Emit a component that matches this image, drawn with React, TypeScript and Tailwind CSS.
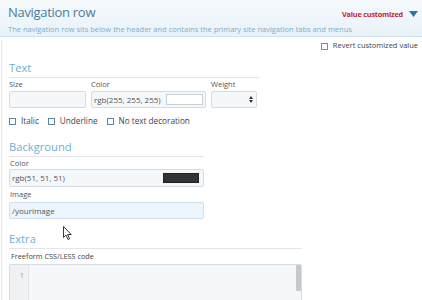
import { ReactNode } from "react";

const font = { fontFamily: '"Open Sans", "Noto Sans", sans-serif' };

const Check = ({
  label,
  gray,
  size = "text-[8.2px]",
}: {
  label: string;
  gray?: boolean;
  size?: string;
}) => (
  <label className={`flex items-center gap-[5px] ${size} text-[#444] whitespace-nowrap`}>
    <span
      className={
        "w-[7px] h-[7px] border bg-white shrink-0 " +
        (gray ? "border-[#8a8a8a]" : "border-[#5b86a8]")
      }
    />
    {label}
  </label>
);

const Heading = ({ children, w }: { children: ReactNode; w: string }) => (
  <div
    className={`${w} h-[18px] border-b border-[#e3e6e8] leading-[16px] text-[11.2px] text-[#6cb0d3]`}
  >
    {children}
  </div>
);

const Field = "border border-[#d3dce3] rounded-[2px] bg-[#f5f8fa]";

export default function App() {
  return (
    <div
      className="relative w-[422px] h-[300px] overflow-hidden bg-white"
      style={font}
    >
      {/* header */}
      <div className="h-[37px] border-b border-[#d5e3ee] bg-gradient-to-b from-[#f5f9fc] to-[#e9f2f9] pl-2 pr-[4px] flex justify-between">
        <div className="min-w-0">
          <div className="text-[13px] tracking-[-0.3px] leading-[18px] pt-[3px] text-[#4d7b9b]">
            Navigation row
          </div>
          <div className="text-[7.5px] leading-[10px] mt-[3px] text-[#7eadca] whitespace-nowrap">
            The navigation row sits below the header and contains the primary
            site navigation tabs and menus
          </div>
        </div>
        <div className="shrink-0 flex items-start gap-[6px] pt-[9px]">
          <span className="text-[7.3px] tracking-[-0.2px] font-bold text-[#c4262e] leading-[10px] whitespace-nowrap">
            Value customized
          </span>
          <svg width="9" height="6" viewBox="0 0 9 6" className="mt-[2px]">
            <path d="M0 0h9L4.5 6z" fill="#2f72ab" />
          </svg>
        </div>
      </div>

      <div className="border-l border-[#e4e6e8] ml-[1px] h-[263px] pl-[7px]">
        <div className="h-[12px] mt-[3px] flex justify-end pr-[4px]">
          <Check label="Revert customized value" gray size="text-[7.5px]" />
        </div>

        {/* Text */}
        <div className="mt-[8px]">
          <Heading w="w-[250px]">Text</Heading>
          <div className="flex gap-[5px] text-[7.5px] text-[#555]">
            <div className="w-[77px]">
              <div className="h-[13px] leading-[13px]">Size</div>
              <div className={`${Field} h-[17px]`} />
            </div>
            <div className="w-[115px]">
              <div className="h-[13px] leading-[13px]">Color</div>
              <div className={`${Field} h-[17px] flex items-center justify-between pl-[2px] pr-[2px]`}>
                <span className="text-[8px] text-[#555] whitespace-nowrap overflow-hidden w-[70px]">
                  rgb(255, 255, 255)
                </span>
                <span className="w-[37px] h-[11px] bg-white border border-[#c6ced6]" />
              </div>
            </div>
            <div className="w-[46px]">
              <div className="h-[13px] leading-[13px]">Weight</div>
              <div className={`${Field} h-[17px] flex items-center justify-end pr-[3px]`}>
                <svg width="4" height="7" viewBox="0 0 4 7">
                  <path d="M0 3L2 0l2 3zM0 4l2 3 2-3z" fill="#333" />
                </svg>
              </div>
            </div>
          </div>
          <div className="flex gap-[9px] h-[12px] mt-[7px]">
            <Check label="Italic" />
            <Check label="Underline" />
            <Check label="No text decoration" />
          </div>
        </div>

        {/* Background */}
        <div className="mt-[12px] w-[195px]">
          <Heading w="w-[195px]">Background</Heading>
          <div className="h-[12px] leading-[12px] text-[7.5px] text-[#555] pl-[1px]">
            Color
          </div>
          <div className={`${Field} h-[18px] flex items-center justify-between pl-[2px] pr-[4px]`}>
            <span className="text-[8px] text-[#555]">rgb(51, 51, 51)</span>
            <span className="w-[36px] h-[10px] bg-[#333333] border border-[#222]" />
          </div>
          <div className="h-[15px] leading-[15px] text-[7.5px] text-[#555] pl-[1px]">
            Image
          </div>
          <div className="h-[17px] border border-[#cfe0ee] rounded-[2px] bg-[#edf5fc] flex items-center pl-[2px] text-[8px] text-[#555]">
            /yourimage
          </div>
        </div>

        {/* Extra */}
        <div className="mt-[12px] w-[293px]">
          <Heading w="w-[293px]">Extra</Heading>
          <div className="h-[15px] leading-[15px] text-[7.3px] text-[#444] pl-[2px]">
            Freeform CSS/LESS code
          </div>
          <div className="h-[40px] border border-[#d6dde3] rounded-[2px] flex bg-[#f4f8fb]">
            <div className="w-[19px] bg-[#f0f1f2] border-r border-[#e2e4e6] text-right pr-[4px] pt-[5px] text-[7.5px] leading-[10px] text-[#999]">
              1
            </div>
            <div className="flex-1" />
            <div className="w-[5px] h-[26px] bg-[#c6c8ca] rounded-[1px]" />
          </div>
        </div>
      </div>

      {/* mouse cursor */}
      <svg
        className="absolute left-[63px] top-[226px]"
        width="9"
        height="14"
        viewBox="0 0 9 14"
      >
        <path
          d="M0.5 0.5v11l2.5-2.5 2 4.5 1.6-0.7-2-4.3h3.6z"
          fill="#fff"
          stroke="#222"
          strokeWidth="0.9"
          strokeLinejoin="round"
        />
      </svg>
    </div>
  );
}
